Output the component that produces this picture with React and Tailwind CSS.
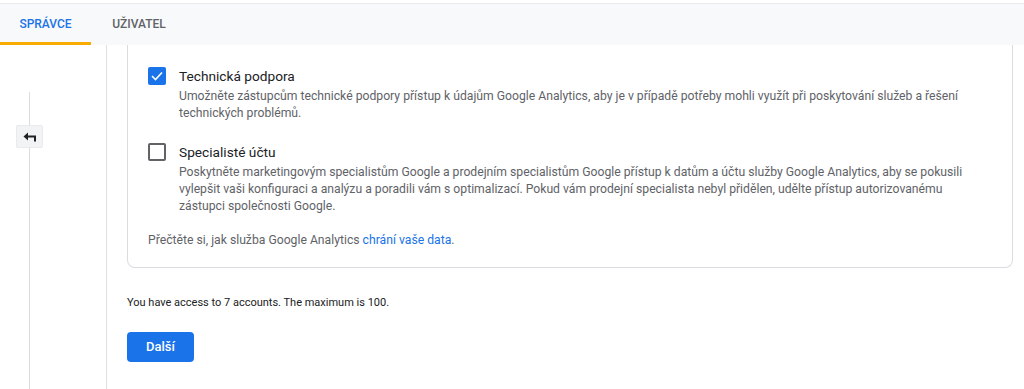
export default function App() {
    return (
        <div className="w-[1024px] h-[389px] overflow-hidden bg-white font-['Roboto',sans-serif] text-[#202124]">
            <div className="h-[3px] bg-white" />
            <div className="h-[42px] bg-[#f8f9fa] border-t border-[#e8eaed] flex items-stretch">
                <div className="w-[91px] flex items-center justify-center text-[12px] font-medium text-[#1a73e8] border-b-[3px] border-[#f9ab00] pt-[2px]">SPRÁVCE</div>
                <div className="w-[96px] flex items-center justify-center text-[12px] font-medium text-[#5f6368] border-b-[3px] border-transparent pt-[2px]">UŽIVATEL</div>
            </div>
            <div className="flex h-[344px]">
                <div className="w-[107px] border-r border-[#e0e0e0] shrink-0 relative">
                    <div className="absolute left-[29px] top-[47px] bottom-0 w-px bg-[#dadce0]" />
                    <button className="absolute left-[16px] top-[80px] w-[27px] h-[23px] bg-[#f1f3f4] border border-[#e8eaed] rounded-[2px] flex items-center justify-center">
                        <svg width="14" height="10" viewBox="0 0 14 10">
                            <path d="M5 0.5 L0.5 4.5 L5 8.5 Z" fill="#202124" />
                            <path d="M3 4.5 H12 V9.5" stroke="#202124" strokeWidth="2" fill="none" />
                        </svg>
                    </button>
                </div>
                <div className="pl-[20px] flex-1">
                    <div className="w-[886px] border border-t-0 border-[#dadce0] rounded-b-[8px] pl-[20px] pr-[24px] pt-[21px] pb-[18px]">
                        <div className="flex">
                            <div className="w-[18px] h-[18px] mt-[1px] rounded-[2px] bg-[#1a73e8] flex items-center justify-center shrink-0">
                                <svg width="12" height="10" viewBox="0 0 12 10">
                                    <path d="M1 5 L4.5 8.5 L11 1.5" stroke="white" strokeWidth="1.6" fill="none" />
                                </svg>
                            </div>
                            <div className="ml-[13px]">
                                <p className="text-[13.7px] leading-[20px] text-[#202124]">Technická podpora</p>
                                <p className="text-[12.2px] leading-[17px] text-[#5f6368] mt-[2px] pr-[20px]">Umožněte zástupcům technické podpory přístup k údajům Google Analytics, aby je v případě potřeby mohli využít při poskytování služeb a řešení technických problémů.</p>
                            </div>
                        </div>
                        <div className="flex mt-[20px]">
                            <div className="w-[18px] h-[18px] mt-[1px] rounded-[2px] border-2 border-[#5f6368] shrink-0" />
                            <div className="ml-[13px]">
                                <p className="text-[13.7px] leading-[20px] text-[#202124]">Specialisté účtu</p>
                                <p className="text-[12.2px] leading-[17px] text-[#5f6368] mt-[2px] pr-[20px]">Poskytněte marketingovým specialistům Google a prodejním specialistům Google přístup k datům a účtu služby Google Analytics, aby se pokusili vylepšit vaši konfiguraci a analýzu a poradili vám s optimalizací. Pokud vám prodejní specialista nebyl přidělen, udělte přístup autorizovanému zástupci společnosti Google.</p>
                            </div>
                        </div>
                        <p className="text-[12.2px] leading-[17px] text-[#5f6368] mt-[17px]">Přečtěte si, jak služba Google Analytics <span className="text-[#1a73e8]">chrání vaše data</span>.</p>
                    </div>
                    <p className="text-[11px] leading-[17px] text-[#202124] mt-[26px]">You have access to 7 accounts. The maximum is 100.</p>
                    <button className="mt-[21px] w-[67px] h-[30px] rounded-[4px] bg-[#1a73e8] text-white text-[13px] font-medium">Další</button>
                </div>
            </div>
        </div>
    );
}
